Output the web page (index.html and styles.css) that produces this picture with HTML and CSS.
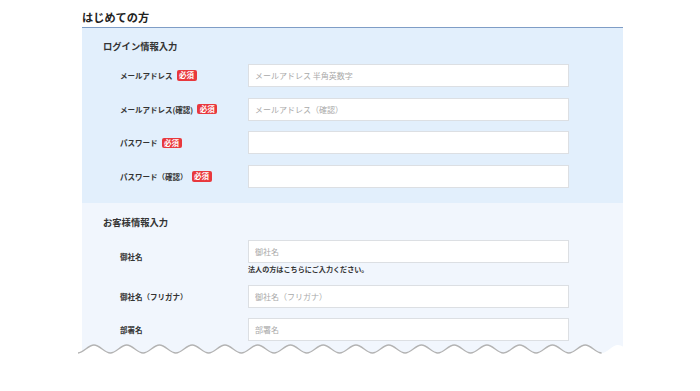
FILE: index.html
```html
<!DOCTYPE html>
<html lang="ja">
<head>
<meta charset="utf-8">
<title>はじめての方</title>
<link rel="stylesheet" href="styles.css">
</head>
<body>
<div class="page">
  <h1 class="page-title">はじめての方</h1>

  <section class="sec sec-login">
    <h2 class="sec-title">ログイン情報入力</h2>
    <div class="rows">
      <div class="label">メールアドレス<span class="req">必須</span></div>
      <div class="field"><input class="inp" type="text" placeholder="メールアドレス 半角英数字"></div>

      <div class="label">メールアドレス(確認)<span class="req">必須</span></div>
      <div class="field"><input class="inp" type="text" placeholder="メールアドレス（確認）"></div>

      <div class="label">パスワード<span class="req">必須</span></div>
      <div class="field"><input class="inp" type="password"></div>

      <div class="label">パスワード（確認）<span class="req">必須</span></div>
      <div class="field"><input class="inp" type="password"></div>
    </div>
  </section>

  <section class="sec sec-customer">
    <h2 class="sec-title">お客様情報入力</h2>
    <div class="rows">
      <div class="label">御社名</div>
      <div class="field">
        <input class="inp" type="text" placeholder="御社名">
        <p class="note">法人の方はこちらにご入力ください。</p>
      </div>

      <div class="label">御社名（フリガナ）</div>
      <div class="field"><input class="inp" type="text" placeholder="御社名（フリガナ）"></div>

      <div class="label">部署名</div>
      <div class="field"><input class="inp" type="text" placeholder="部署名"></div>
    </div>
  </section>

  <svg class="tear" width="550" height="51" viewBox="0 0 550 51" aria-hidden="true">
    <path class="tear-fill" d="M-0.4 13 c5.96 0 10.41 -8 16.375 -8 s10.41 8 16.375 8 s10.41 -8 16.375 -8 s10.41 8 16.375 8 s10.41 -8 16.375 -8 s10.41 8 16.375 8 s10.41 -8 16.375 -8 s10.41 8 16.375 8 s10.41 -8 16.375 -8 s10.41 8 16.375 8 s10.41 -8 16.375 -8 s10.41 8 16.375 8 s10.41 -8 16.375 -8 s10.41 8 16.375 8 s10.41 -8 16.375 -8 s10.41 8 16.375 8 s10.41 -8 16.375 -8 s10.41 8 16.375 8 s10.41 -8 16.375 -8 s10.41 8 16.375 8 s10.41 -8 16.375 -8 s10.41 8 16.375 8 s10.41 -8 16.375 -8 s10.41 8 16.375 8 s10.41 -8 16.375 -8 s10.41 8 16.375 8 s10.41 -8 16.375 -8 s10.41 8 16.375 8 s10.41 -8 16.375 -8 s10.41 8 16.375 8 s10.41 -8 16.375 -8 s10.41 8 16.375 8 s10.41 -8 16.375 -8 s10.41 8 16.375 8 L560 60 L-10 60 Z"/>
    <path class="tear-line" d="M-0.4 13 c5.96 0 10.41 -8 16.375 -8 s10.41 8 16.375 8 s10.41 -8 16.375 -8 s10.41 8 16.375 8 s10.41 -8 16.375 -8 s10.41 8 16.375 8 s10.41 -8 16.375 -8 s10.41 8 16.375 8 s10.41 -8 16.375 -8 s10.41 8 16.375 8 s10.41 -8 16.375 -8 s10.41 8 16.375 8 s10.41 -8 16.375 -8 s10.41 8 16.375 8 s10.41 -8 16.375 -8 s10.41 8 16.375 8 s10.41 -8 16.375 -8 s10.41 8 16.375 8 s10.41 -8 16.375 -8 s10.41 8 16.375 8 s10.41 -8 16.375 -8 s10.41 8 16.375 8 s10.41 -8 16.375 -8 s10.41 8 16.375 8 s10.41 -8 16.375 -8 s10.41 8 16.375 8 s10.41 -8 16.375 -8 s10.41 8 16.375 8 s10.41 -8 16.375 -8 s10.41 8 16.375 8 s10.41 -8 16.375 -8 s10.41 8 16.375 8"/>
  </svg>
</div>
</body>
</html>
```

FILE: styles.css
```css
* { box-sizing: border-box; }

html, body {
  margin: 0;
  padding: 0;
  background: #ffffff;
}

body {
  font-family: "Noto Sans CJK JP", "Noto Sans", sans-serif;
  color: #333333;
  overflow: hidden;
  height: 391px;
}

.page {
  position: relative;
  width: 541px;
  margin-left: 82px;
  padding-top: 10px;
}

.page-title {
  margin: 0;
  font-size: 11.2px;
  line-height: 14px;
  font-weight: 700;
  color: #222;
  padding-bottom: 3px;
  border-bottom: 1px solid #7f9dc6;
}

.sec {
  padding-top: 11px;
  padding-bottom: 15px;
}

.sec-login {
  background: #e2effc;
}

.sec-customer {
  background: #f1f6fd;
  padding-top: 12px;
  padding-bottom: 30px;
}

.sec-title {
  margin: 0 0 11px;
  padding-left: 21px;
  font-size: 9.3px;
  line-height: 14px;
  font-weight: 700;
  color: #333;
}

.rows {
  display: grid;
  grid-template-columns: 128px 321px;
  row-gap: 10.67px;
  padding-left: 38px;
}

.sec-customer .rows {
  row-gap: 10.7px;
}

.label {
  display: flex;
  align-items: center;
  font-size: 7.5px;
  font-weight: 700;
  color: #333;
  white-space: nowrap;
}

.req {
  display: inline-block;
  margin-left: 4px;
  padding: 0 2.5px;
  font-size: 7.5px;
  line-height: 10.5px;
  font-weight: 700;
  color: #ffffff;
  background: #e8383d;
  border-radius: 2px;
}

.field {
  display: flex;
  flex-direction: column;
}

.inp {
  display: block;
  width: 321px;
  height: 23px;
  margin: 0;
  padding: 0 6px;
  border: 1px solid #dcdfe3;
  border-radius: 0;
  background: #ffffff;
  font-family: "Noto Sans CJK JP", "Noto Sans", sans-serif;
  font-size: 8px;
  color: #333;
  outline: none;
}

.inp::placeholder {
  color: #a9a9a9;
}

.note {
  margin: 1px 0 0;
  font-size: 7.1px;
  line-height: 10px;
  font-weight: 700;
  color: #333;
  white-space: nowrap;
}

.tear {
  position: absolute;
  left: -4px;
  top: 340px;
  display: block;
}

.tear-fill {
  fill: #ffffff;
  stroke: none;
}

.tear-line {
  fill: none;
  stroke: #b3b3b3;
  stroke-width: 1.3;
}
```
